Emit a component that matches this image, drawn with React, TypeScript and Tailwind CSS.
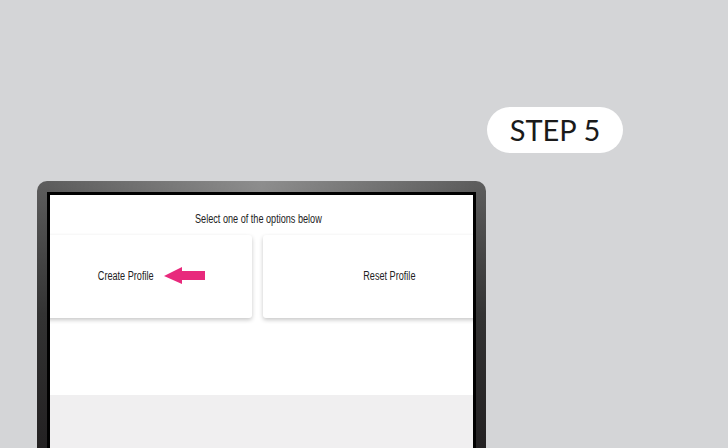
import React from 'react'

// Kiosk walkthrough slide: step badge over a tablet frame showing the profile choices
const narrow = { fontFamily: '"Liberation Sans", Arial, sans-serif' }

function Label({ children }: { children: React.ReactNode }) {
  // the kiosk uses a condensed face; squeeze Liberation Sans to match its width
  return (
    <span className="inline-block scale-x-[0.76] whitespace-nowrap text-[12px] leading-[14px] text-[#222]" style={narrow}>
      {children}
    </span>
  )
}

function Arrow() {
  return (
    <svg width="42" height="18" viewBox="0 0 42 18" className="absolute left-[164px] top-1/2 -translate-y-1/2">
      <path d="M0 9 L18 0 L18 4 L41 4 L41 13 L18 13 L18 17 Z" fill="#e8297c" />
    </svg>
  )
}

function OptionCard({ label, children, className }: { label: string; children?: React.ReactNode; className?: string }) {
  return (
    <div
      className={`relative flex h-[83px] items-center justify-center rounded-[3px] bg-white shadow-[0_2px_4px_rgba(0,0,0,0.22)] ${className ?? ''}`}
    >
      <Label>{label}</Label>
      {children}
    </div>
  )
}

export default function App() {
  return (
    <div className="flex h-[448px] w-[728px] flex-col overflow-hidden bg-[#d4d5d7]">
      {/* step badge */}
      <div className="ml-[487px] mt-[107px] flex h-[48px] w-[136px] items-center justify-center rounded-full bg-white">
        <span className="text-[29px] leading-none text-[#1a1a1a]" style={{ fontFamily: 'Lato, "Liberation Sans", sans-serif' }}>
          STEP 5
        </span>
      </div>

      {/* device frame */}
      <div className="relative ml-[37px] mt-[28px] flex h-[280px] w-[449px] flex-col rounded-t-[10px] bg-gradient-to-b from-[#5e5e5e] via-[#333] to-[#232122] px-[10px] pt-[11px]">
        <div className="pointer-events-none absolute left-[10px] right-[10px] top-0 h-[11px] bg-gradient-to-r from-transparent via-white/30 to-transparent" />
        <div className="flex flex-1 flex-col overflow-hidden border-[3px] border-b-0 border-black bg-white">
          <div className="ml-[-50px] flex w-[516px] flex-col">
            <p className="mt-[17px] text-center text-[12px] leading-[14px]">
              <Label>Select one of the options below</Label>
            </p>
            <div className="mt-[9px] flex gap-[11px]">
              <OptionCard label="Create Profile" className="w-[252px]">
                <Arrow />
              </OptionCard>
              <OptionCard label="Reset Profile" className="w-[253px]" />
            </div>
          </div>
          <div className="mt-[77px] flex-1 bg-[#f0eff0]" />
        </div>
      </div>
    </div>
  )
}
